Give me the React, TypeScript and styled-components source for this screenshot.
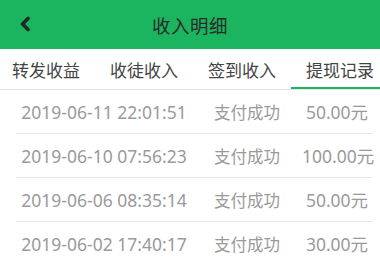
import React from 'react'
import styled, { createGlobalStyle } from 'styled-components'

const GlobalStyle = createGlobalStyle`
  html, body {
    margin: 0;
    padding: 0;
    background: #fff;
  }
  body {
    font-family: "Noto Sans CJK SC", "Noto Sans", sans-serif;
  }
`

const Page = styled.div`
  width: 380px;
  height: 262px;
  overflow: hidden;
  background: #fff;
`

const Header = styled.header`
  height: 49px;
  background: #1bb45f;
  display: grid;
  grid-template-columns: 49px 1fr 49px;
  align-items: center;
`

const BackButton = styled.div`
  display: flex;
  justify-content: center;
  align-items: center;
  padding-left: 1px;
  padding-bottom: 2px;
`

const Title = styled.h1`
  margin: 0;
  text-align: center;
  font-size: 18.5px;
  font-weight: normal;
  color: #2b2b2b;
  letter-spacing: 0.5px;
`

const Tabs = styled.nav`
  height: 41px;
  display: flex;
  overflow: hidden;
  border-bottom: 1px solid #e4e4e4;
  box-sizing: border-box;
`

const Tab = styled.div<{ $active?: boolean }>`
  flex: 0 0 98px;
  display: flex;
  justify-content: center;
  align-items: center;
  font-size: 17px;
  color: #444;
  box-sizing: border-box;
  border-bottom: 3px solid ${({ $active }) => ($active ? '#1bb45f' : 'transparent')};
  margin-bottom: -1px;
  padding-top: 2px;
  &:first-child {
    margin-left: -3px;
  }
`

const List = styled.ul`
  list-style: none;
  margin: 0;
  padding: 0 8px 0 16px;
`

const Row = styled.li`
  height: 44px;
  box-sizing: border-box;
  display: flex;
  align-items: center;
  border-bottom: 1px solid #e6e6e6;
  color: #9a9a9a;
  font-size: 17.5px;
  font-family: "Noto Sans", "Noto Sans CJK SC", sans-serif;
`

const Cell = styled.span<{ $width: number }>`
  flex: 0 0 ${({ $width }) => $width}px;
  text-align: center;
  white-space: nowrap;
`

const Status = styled(Cell)`
  font-family: "Noto Sans CJK SC", sans-serif;
  font-size: 16.5px;
`

const records = [
  { time: '2019-06-11 22:01:51', status: '支付成功', amount: '50.00元' },
  { time: '2019-06-10 07:56:23', status: '支付成功', amount: '100.00元' },
  { time: '2019-06-06 08:35:14', status: '支付成功', amount: '50.00元' },
  { time: '2019-06-02 17:40:17', status: '支付成功', amount: '30.00元' },
]

const tabs = ['转发收益', '收徒收入', '签到收入', '提现记录']

export default function App() {
  return (
    <Page>
      <GlobalStyle />
      <Header>
        <BackButton>
          <svg width="12" height="16" viewBox="0 0 12 16">
            <polyline points="9,2.5 3.5,8 9,13.5" fill="none" stroke="#1e2a22" strokeWidth="3.6" strokeLinecap="round" strokeLinejoin="round" />
          </svg>
        </BackButton>
        <Title>收入明细</Title>
        <div />
      </Header>
      <Tabs>
        {tabs.map((t, i) => (
          <Tab key={t} $active={i === 3}>
            {t}
          </Tab>
        ))}
      </Tabs>
      <List>
        {records.map((r) => (
          <Row key={r.time}>
            <Cell $width={176}>{r.time}</Cell>
            <Status $width={110}>{r.status}</Status>
            <Cell $width={70}>{r.amount}</Cell>
          </Row>
        ))}
      </List>
    </Page>
  )
}
